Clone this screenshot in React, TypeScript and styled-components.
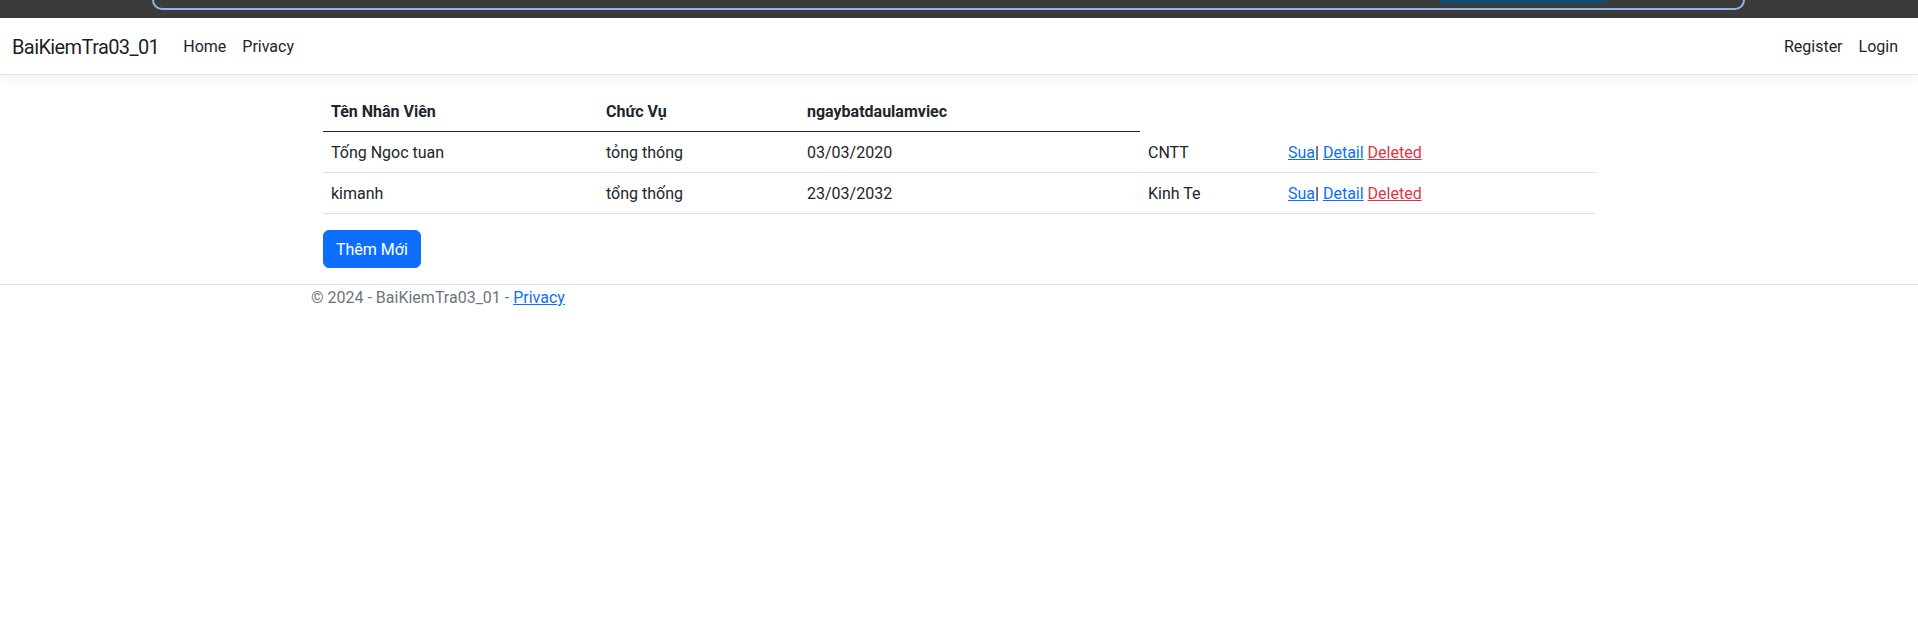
import * as React from 'react'
import styled, { createGlobalStyle } from 'styled-components'

const GlobalStyle = createGlobalStyle`
  html { font-size: 16px; }
  body {
    margin: 0;
    font-family: Roboto, 'Noto Sans', 'Liberation Sans', sans-serif;
    font-size: 1rem;
    line-height: 1.5;
    color: #212529;
    background: #fff;
  }
  * { box-sizing: border-box; }
`

// browser chrome sliver above the page
const TopStrip = styled.div`
  height: 18px;
  background: #3b3b3b;
  padding: 0 173px 0 152px;
  overflow: hidden;
`

const SearchBox = styled.div`
  height: 10px;
  border: 2px solid #92b4ec;
  border-top: none;
  border-radius: 0 0 14px 14px;
  display: flex;
  justify-content: flex-end;
  padding-right: 136px;
`

const SearchButton = styled.div`
  width: 169px;
  height: 3px;
  background: #0b4d7c;
  border-radius: 0 0 6px 6px;
`

const Navbar = styled.nav`
  display: flex;
  align-items: center;
  justify-content: space-between;
  padding: 8px 12px;
  border-bottom: 1px solid #dee2e6;
  box-shadow: 0 0.25rem 0.75rem rgba(0, 0, 0, 0.05);
  margin-bottom: 16px;
`

const NavGroup = styled.div`
  display: flex;
  align-items: center;
`

const Brand = styled.a`
  font-size: 20px;
  line-height: 30px;
  letter-spacing: -0.6px;
  padding: 6px 0 4px;
  margin-right: 16px;
  color: rgba(0, 0, 0, 0.9);
  text-decoration: none;
`

const NavLink = styled.a`
  padding: 9px 8px 7px;
  color: #212529;
  text-decoration: none;
`

const Container = styled.div`
  max-width: 1320px;
  margin: 0 auto;
  padding: 0 12px;
`

const Main = styled.main`
  padding: 0 12px 16px;
`

const Table = styled.table`
  width: 1272px;
  table-layout: fixed;
  border-collapse: collapse;
  margin-bottom: 16px;
`

const Th = styled.th`
  text-align: left;
  font-weight: 700;
  padding: 9px 8px 7px;
  vertical-align: bottom;
  border-bottom: 1px solid #212529;
`

const Td = styled.td`
  padding: 9px 8px 7px;
  border-bottom: 1px solid #dee2e6;
`

const Link = styled.a<{ $danger?: boolean }>`
  color: ${(p) => (p.$danger ? '#dc3545' : '#0d6efd')};
  text-decoration: underline;
`

const PrimaryButton = styled.button`
  font: inherit;
  color: #fff;
  background: #0d6efd;
  border: 1px solid #0d6efd;
  border-radius: 6px;
  padding: 7px 12px 5px;
  line-height: 24px;
`

const Footer = styled.footer`
  border-top: 1px solid #dee2e6;
  color: #6c757d;
  padding-top: 1px;
`

const colWidths = [275, 201, 341, 140, 315]

const rows = [
  { name: 'Tống Ngoc tuan', role: 'tỏng thóng', date: '03/03/2020', dept: 'CNTT' },
  { name: 'kimanh', role: 'tổng thống', date: '23/03/2032', dept: 'Kinh Te' },
]

export default function App() {
  return (
    <>
      <GlobalStyle />
      <TopStrip>
        <SearchBox>
          <SearchButton />
        </SearchBox>
      </TopStrip>
      <header>
        <Navbar>
          <NavGroup>
            <Brand href="#">BaiKiemTra03_01</Brand>
            <NavLink href="#">Home</NavLink>
            <NavLink href="#">Privacy</NavLink>
          </NavGroup>
          <NavGroup>
            <NavLink href="#">Register</NavLink>
            <NavLink href="#">Login</NavLink>
          </NavGroup>
        </Navbar>
      </header>
      <Container>
        <Main>
          <Table>
            <colgroup>
              {colWidths.map((w, i) => (
                <col key={i} style={{ width: w }} />
              ))}
            </colgroup>
            <thead>
              <tr>
                <Th>Tên Nhân Viên</Th>
                <Th>Chức Vụ</Th>
                <Th>ngaybatdaulamviec</Th>
              </tr>
            </thead>
            <tbody>
              {rows.map((r) => (
                <tr key={r.name}>
                  <Td>{r.name}</Td>
                  <Td>{r.role}</Td>
                  <Td>{r.date}</Td>
                  <Td>{r.dept}</Td>
                  <Td>
                    <Link href="#">Sua</Link>| <Link href="#">Detail</Link>{' '}
                    <Link href="#" $danger>
                      Deleted
                    </Link>
                  </Td>
                </tr>
              ))}
            </tbody>
          </Table>
          <PrimaryButton>Thêm Mới</PrimaryButton>
        </Main>
      </Container>
      <Footer>
        <Container>
          © 2024 - BaiKiemTra03_01 - <Link href="#">Privacy</Link>
        </Container>
      </Footer>
    </>
  )
}
